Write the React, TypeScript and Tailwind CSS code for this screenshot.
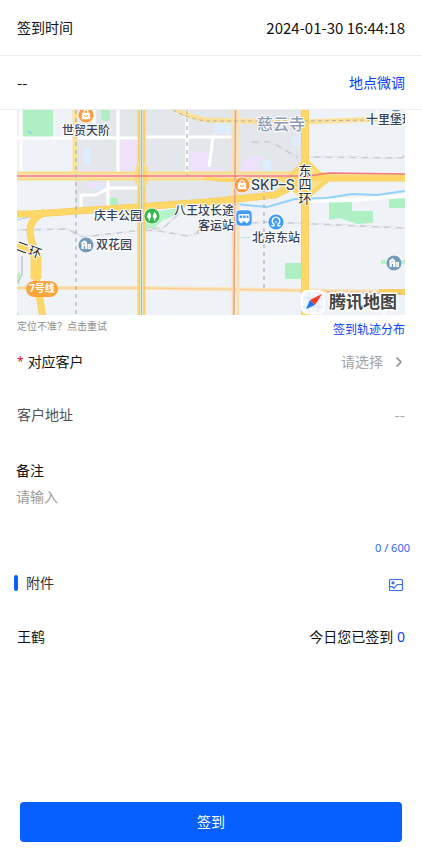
import { useState } from "react";
import type { ReactNode } from "react";
import { ChevronRight } from "lucide-react";

const MAX_REMARK = 600;

const PLACES = [
    { text: "世贸天阶", x: 69, y: 25, anchor: "middle" },
    { text: "庆丰公园", x: 101, y: 110, anchor: "middle" },
    { text: "八王坟长途", x: 217, y: 105, anchor: "end" },
    { text: "客运站", x: 217, y: 120, anchor: "end" },
    { text: "北京东站", x: 259, y: 132, anchor: "middle" },
    { text: "双花园", x: 97, y: 139, anchor: "middle" },
    { text: "十里堡环", x: 349, y: 14, anchor: "start" },
] as const;

function Marker({ x, y, color, children }: { x: number; y: number; color: string; children?: ReactNode }) {
    return (
        <g transform={`translate(${x} ${y})`}>
            <circle r="8.4" fill="#fff" opacity="0.7" />
            <circle r="7.6" fill={color} />
            {children}
        </g>
    );
}

function Bag() {
    return (
        <g>
            <path d="M-4 -2.2H4L4.4 4.2H-4.4Z" fill="#fff" />
            <path d="M-2 -2V-3A2 2 0 0 1 2 -3V-2" fill="none" stroke="#fff" strokeWidth="1.2" />
            <path d="M-1.6 0A1.6 1.6 0 0 0 1.6 0" fill="none" stroke="#ff9a3d" strokeWidth="0.9" />
        </g>
    );
}

function Building() {
    return (
        <g fill="#fff">
            <path d="M-5.5 -1.8L-1.6 -4.8L1 -2.8V4H-0.8V1H-2.2V4H-4.4V-1.5Z" />
            <path d="M1.6 -1H5V4H1.6Z" />
            <path d="M-3 -1.2H-0.4M2.8 0.8H3.8M2.8 2.4H3.8" stroke="#739cba" strokeWidth="0.8" />
        </g>
    );
}

function CityMap() {
    return (
        <svg
            viewBox="0 0 388 205"
            className="block w-full font-['Noto_Sans','Noto_Sans_CJK_SC',sans-serif]"
            role="img"
            aria-label="签到地图"
        >
            <rect width="388" height="205" fill="#eff3f8" />

            {/* districts and parks */}
            <path d="M58 0H285V50L275 63L258 84L190 91L58 98Z" fill="#e3e6eb" />
            <path d="M5.5 0H36V27H5.5ZM93 88H101V95H93ZM268 153H284V169H268ZM372 89L388 87V98H372Z" fill="#aef0c4" />
            <rect x="84" y="-5" width="9" height="16" rx="4" fill="#aef0c4" />
            <path d="M312 92L335 91V101H356V113L340 114L322 108L312 110Z" fill="#aef0c4" />
            <path d="M128 103L163 98L157 106L146 110L136 119H128Z" fill="#b5f2c8" />
            <path d="M0 164L3 162V174H0ZM364 150H388V154H364ZM0 202L3 205H0ZM224 127H233V128H224Z" fill="#b5f2c8" />
            <path d="M103 29H121V62H103ZM61 60H90V64H61ZM71 72H90V78H71ZM173 42H191V62H173ZM193 57H204V62H193ZM227 47H246L239 62H223ZM181 5H187V11H181Z" fill="#eee2fa" />
            <path d="M66 38H73V55H66ZM79 75H88V80H79ZM197 13H216V24H197ZM246 50H254V62H246ZM275 28L284 24V36H275Z" fill="#deedfd" />
            <path d="M10 20L15 23L13 24Z" fill="#76c7ed" />

            {/* water */}
            <g fill="none" stroke="#93d2fb">
                <path d="M0 110L17 106L60 103L121 98" strokeWidth="1" />
                <path d="M290 91L335 90L388 86" stroke="#fff" strokeWidth="4" />
                <path d="M219 94L250 97L278 89L310 88L335 84L360 85L388 81" strokeWidth="2" />
            </g>

            {/* side streets */}
            <g fill="none" stroke="#fff" strokeWidth="3">
                <path d="M4 0V62M0 28H121M101 0V64M91 68V96M64 98V85H79L92 78H121M77 0V27" />
                <path d="M129 27H217M196 27L192 57M170 0V65M360 0V8M367 184V205" />
            </g>

            {/* railways */}
            <g fill="none">
                <g stroke="#c8ccd2" strokeWidth="1.6">
                    <path d="M0 120L50 119L66 127L100 123L133 119L146 118L163 103" />
                    <path d="M123 120L143 121L170 126L195 119L233 113L253 112L388 118M175 126L188 115" />
                    <path d="M229 32H253L263 37L281 48M291 47L385 48L388 45" />
                    <path d="M5 146V164L1 172" />
                </g>
                <g stroke="#fafbfc" strokeWidth="0.9" strokeDasharray="6 6">
                    <path d="M0 120L50 119L66 127L100 123L133 119L146 118L163 103" />
                    <path d="M123 120L143 121L170 126L195 119L233 113L253 112L388 118M175 126L188 115" />
                    <path d="M229 32H253L263 37L281 48M291 47L385 48L388 45" />
                </g>
            </g>

            {/* secondary roads */}
            <g fill="none" stroke="#fbe19a">
                <path d="M58 0V66" strokeWidth="5" />
                <path d="M152 -5Q172 8 190 10Q240 12 288 12L388 8" strokeWidth="5" />
                <path d="M0 66H285" stroke="#eeeae4" strokeWidth="6" />
                <path d="M0 63H285M0 69H285" stroke="#fbdc8a" strokeWidth="3" />
                <path d="M0 178H125L388 182" stroke="#fbe3bb" strokeWidth="4" />
                <path d="M0 178H125L388 182" stroke="#fbc98c" strokeWidth="1" />
                <path d="M362 182H388" stroke="#fccf5e" strokeWidth="6" />
                <path d="M216 0V205M221 0V205" stroke="#fbe2ad" strokeWidth="3" />
            </g>

            {/* expressways */}
            <g fill="none" strokeLinejoin="round">
                <g stroke="#f6c95e">
                    <path d="M0 104H16L60 101L121 97L190 92L258 85L274 77L288 68H388" strokeWidth="7" />
                    <path d="M288 0V205" strokeWidth="8" />
                    <path d="M28 102Q14 108 13 120Q13 130 19 143V168L26 207" strokeWidth="7" />
                </g>
                <path d="M288 48L272 66L262 80L275 80L288 91L312 71L303 62Z" fill="#fde08a" stroke="#f9cf66" strokeWidth="1" />
                <g stroke="#fed767">
                    <path d="M0 104H16L60 101L121 97L190 92L258 85L274 77L288 68H388" strokeWidth="6" />
                    <path d="M288 0V205" strokeWidth="7" />
                    <path d="M28 102Q14 108 13 120Q13 130 19 143V168L26 207" strokeWidth="6" />
                    <path d="M288 49L272 68M288 49L303 63L318 68M288 88L310 70M288 88L276 79" strokeWidth="3" />
                    <path d="M188 67Q192 70 215 70L280 69" strokeWidth="4" />
                    <path d="M0 135L20 145" strokeWidth="7" />
                </g>
                <path d="M19 143V169" stroke="#fed767" strokeWidth="11" />
                <path d="M122 0V205M127 0V205" stroke="#fcd066" strokeWidth="3" />
                <path d="M122 52L119 62V70L122 76M127 52L130 62V70L127 76" stroke="#fcdc85" strokeWidth="3" />
            </g>

            {/* metro lines */}
            <g fill="none">
                <path d="M124.500 0V205" stroke="#fff" strokeWidth="2" />
                <path d="M124.500 0V205" stroke="#6ecdf0" strokeWidth="1.4" />
                <path d="M218.500 0L217 205" stroke="#e79a91" strokeWidth="1.4" />
                <path d="M0 66H291L312 63L388 64" stroke="#f77779" strokeWidth="1.4" />
                <path d="M59 0V205M170 0V65M247 70V178" stroke="#aeb2ba" strokeWidth="1.2" strokeDasharray="4 4" />
                <path d="M156 0Q172 9 190 11H285L353 10M310 182L388 184" stroke="#b5ae9e" strokeWidth="1" strokeDasharray="4 3" />
            </g>

            {/* markers */}
            <Marker x={69} y={5} color="#ff9a3d"><Bag /></Marker>
            <Marker x={225} y={75} color="#ff9a3d"><Bag /></Marker>
            <Marker x={135} y={106} color="#35b84b">
                <path d="M-2.7 -4C-5.5 -1 -5.5 2 -2.7 3.2C-0.2 2 -0.2 -1 -2.7 -4ZM2.7 -4C5.5 -1 5.5 2 2.7 3.2C0.2 2 0.2 -1 2.7 -4Z" fill="#fff" />
                <path d="M-2.7 3V5M2.7 3V5" stroke="#fff" />
            </Marker>
            <g transform="translate(227 108)">
                <rect x="-8" y="-8" width="16" height="16" rx="4" fill="#3e9bfa" stroke="#fff" strokeWidth="0.6" />
                <rect x="-5.5" y="-4" width="11" height="7.5" rx="1.2" fill="#fff" />
                <path d="M-4.3 -2.5H-1.8V0H-4.3ZM-0.8 -2.5H1.7V0H-0.8ZM2.7 -2.5H4.5V0H2.7Z" fill="#3e9bfa" />
                <circle cx="-2.8" cy="3.8" r="1.4" fill="#fff" />
                <circle cx="2.8" cy="3.8" r="1.4" fill="#fff" />
            </g>
            <Marker x={259} y={112} color="#3e9bfa">
                <path d="M-2 3.8V2.2A3.8 3.8 0 1 1 2 2.2V3.8M-4.6 3.8H-1.4M1.4 3.8H4.6M0 -0.8V0.8" fill="none" stroke="#fff" strokeWidth="1.4" />
            </Marker>
            <Marker x={69} y={135} color="#739cba"><Building /></Marker>
            <Marker x={377} y={153} color="#739cba"><Building /></Marker>
            <Marker x={379} y={-6} color="#739cba" />

            {/* labels */}
            <g fontSize="12" fontWeight="500" fill="#34435c" stroke="#fff" strokeWidth="2" paintOrder="stroke" strokeLinejoin="round">
                {PLACES.map((p) => (
                    <text key={p.text} x={p.x} y={p.y} textAnchor={p.anchor}>{p.text}</text>
                ))}
                <text x="234" y="80" fontSize="14" className="font-['Inter',sans-serif]">SKP–S</text>
                <text x="240" y="20" fontSize="16" fill="#8d9bb3">慈云寺</text>
            </g>
            <g fontSize="13" fill="#2c2c2c" stroke="#fff" strokeWidth="2" paintOrder="stroke" textAnchor="middle">
                <text x="288" y="65">东</text>
                <text x="288" y="79">四</text>
                <text x="288" y="93">环</text>
                <text x="5" y="142" transform="rotate(20 5 137)">二</text>
                <text x="18" y="147" transform="rotate(20 18 142)">环</text>
            </g>
            <rect x="9" y="171" width="32" height="16" rx="8" fill="#fba63c" />
            <text x="25" y="182" fontSize="10" fontWeight="700" fill="#fff" textAnchor="middle">7号线</text>

            {/* provider logo */}
            <rect x="285" y="181" width="22" height="22" rx="5" fill="#f4f8fc" stroke="#fff" strokeWidth="2" />
            <path d="M292 182V203M301 182V203M286 188H307M286 197H307" stroke="#cfe6f7" strokeWidth="1" />
            <path d="M305 184L293 190L298 195Z" fill="#fb3a1c" />
            <path d="M289 199L293 190L298 195Z" fill="#2277e6" />
            <text x="312" y="198" fontSize="17" fontWeight="700" fill="#444" stroke="#fff" strokeWidth="3" paintOrder="stroke">腾讯地图</text>
        </svg>
    );
}

function PictureIcon() {
    return (
        <svg viewBox="0 0 16 14" className="h-3.5 w-4" fill="none" stroke="#3b6ef5" strokeWidth="1.2" aria-hidden="true">
            <rect x="1.500" y="1.500" width="13" height="11" rx="1" />
            <circle cx="5" cy="4.800" r="1.600" fill="#3b6ef5" stroke="none" />
            <path d="M1.500 8.800L4 8.500L6 10.300L8.500 7.200L10 6.500H14.500" />
        </svg>
    );
}

export default function App() {
    const [remark, setRemark] = useState("");

    return (
        <main className="flex min-h-screen flex-col bg-white font-['Noto_Sans','Noto_Sans_CJK_SC',sans-serif] text-sm text-[#111]">
            <div className="flex h-14 items-center justify-between border-b border-[#ebedf0] px-[17px]">
                <span>签到时间</span>
                <time dateTime="2024-01-30T16:44:18" className="font-['Noto_Sans_CJK_SC',sans-serif] text-[15px]">
                    2024-01-30 16:44:18
                </time>
            </div>
            <div className="flex h-[54px] items-center justify-between border-b border-[#ebedf0] px-[17px]">
                <span className="font-['Noto_Sans_CJK_SC',sans-serif] text-[15px]">--</span>
                <button type="button" className="text-[#0a3cff]">地点微调</button>
            </div>

            <section className="px-[17px]">
                <CityMap />
                <div className="flex h-[29px] items-center justify-between">
                    <button type="button" className="pb-1.5 text-[10px] text-[#8c8c8c]">定位不准？点击重试</button>
                    <a href="#track" className="text-xs text-[#0a3cff]">签到轨迹分布</a>
                </div>
            </section>

            <div className="flex h-9 items-center justify-between px-[17px]">
                <span id="customer-label" className="flex items-center gap-1">
                    <span className="text-xs text-[#ee0a24]">*</span>
                    对应客户
                </span>
                <button type="button" aria-labelledby="customer-label" className="flex items-center gap-2 text-[#a3a3a3]">
                    请选择
                    <ChevronRight className="-mr-0.5 size-4 text-[#8c8c8c]" strokeWidth={2.5} />
                </button>
            </div>
            <div className="flex h-[70px] items-center justify-between px-[17px]">
                <span className="text-[#505050]">客户地址</span>
                <span className="font-['Noto_Sans_CJK_SC',sans-serif] text-[15px] text-[#a3a3a3]">--</span>
            </div>

            <div className="flex flex-col px-4 pt-[9px]">
                <label htmlFor="remark" className="leading-6">备注</label>
                <textarea
                    id="remark"
                    value={remark}
                    maxLength={MAX_REMARK}
                    onChange={(e) => setRemark(e.target.value)}
                    placeholder="请输入"
                    className="h-[57px] resize-none leading-7 outline-none placeholder:text-[#9a9a9a]"
                />
            </div>
            <p className="px-3 text-right text-[11px] leading-4 text-[#3366ee]">
                {remark.length} / {MAX_REMARK}
            </p>

            <div className="flex h-[54px] items-center justify-between pr-[18px] pl-3.5">
                <h2 className="flex items-center gap-2 text-[#333]">
                    <span className="h-4 w-1 rounded-xs bg-[#0560ff]" />
                    附件
                </h2>
                <button type="button" aria-label="上传附件" className="pt-1">
                    <PictureIcon />
                </button>
            </div>
            <div className="flex h-[54px] items-center justify-between px-[17px]">
                <span>王鹤</span>
                <span>
                    今日您已签到 <span className="text-[#0a3cff]">0</span>
                </span>
            </div>

            <div className="mt-auto px-5 pb-4">
                <button type="button" className="h-10 w-full rounded bg-[#0560ff] text-white">签到</button>
            </div>
        </main>
    );
}
